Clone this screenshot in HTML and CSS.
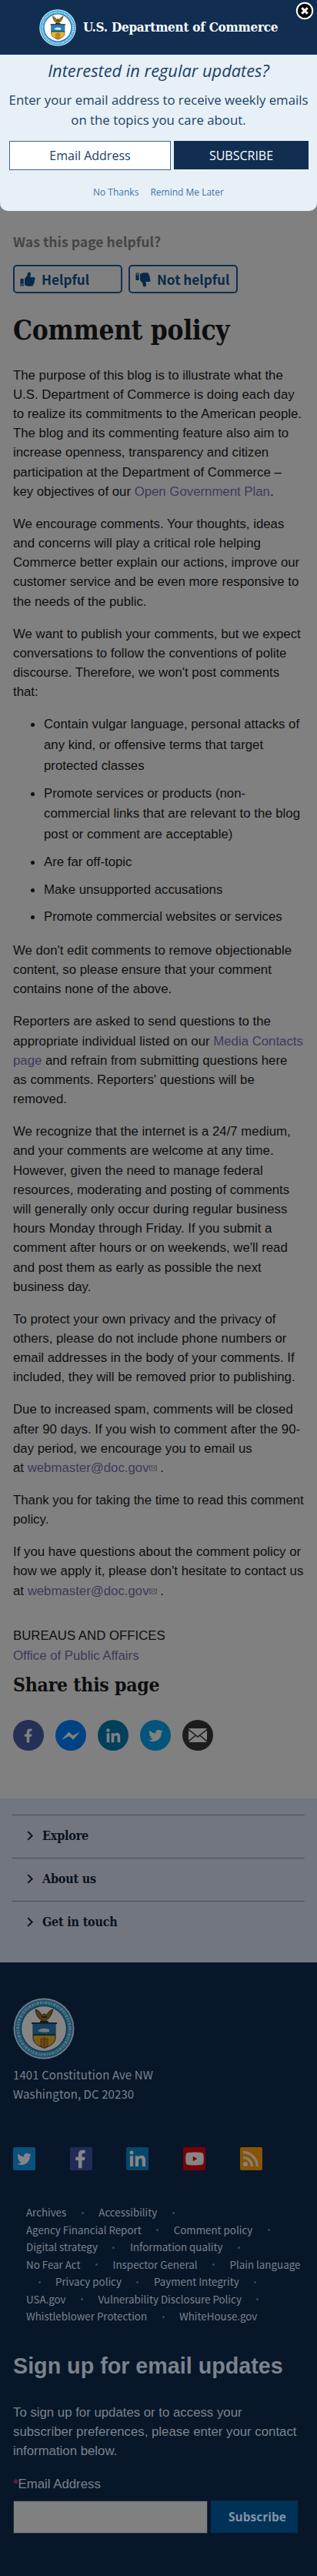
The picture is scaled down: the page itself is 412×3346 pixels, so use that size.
FILE: index.html
```html
<!DOCTYPE html>
<html lang="en">
<head>
<meta charset="utf-8">
<title>Comment policy | U.S. Department of Commerce</title>
<link rel="stylesheet" href="styles.css">
</head>
<body>
<svg class="defs" width="0" height="0" aria-hidden="true">
  <defs>
    <symbol id="seal" viewBox="0 0 80 80">
      <circle cx="40" cy="40" r="39.500" fill="#e4f1f8"/>
      <circle cx="40" cy="40" r="37.800" fill="#36a3da"/>
      <circle cx="40" cy="40" r="33.800" fill="none" stroke="#b5def2" stroke-width="3.600" stroke-dasharray="2.200 1.300 1.400 1.600 3 1.500"/>
      <circle cx="40" cy="40" r="30" fill="#17548a"/>
      <circle cx="40" cy="40" r="29" fill="#fff"/>
      <path d="M29 15c4 1 7 4 8.500 8l1.500-2h3l1 2c2-4 4.500-7 9-8-1 5-3 9-6 12l-3 2 2 3h-10l2-3-3-2c-3-3-4.500-7-5-12z" fill="#9b7420" stroke="#3c2c14" stroke-width=".8"/>
      <path d="M37 25h7M35 31h11" stroke="#241b10" stroke-width="1.500"/>
      <path d="M26 33h29v19c0 7-6 10-14.500 13.500C32 62 26 59 26 52z" fill="#e8b530" stroke="#2c3940"/>
      <path d="M26 33h29v16H26z" fill="#287fbc"/>
      <path d="M24 33h33" stroke="#243e4c" stroke-width="2"/>
      <path d="M26 47h29v2H26z" fill="#264b39"/>
      <path d="M32 43c4-4 9-4 15-2v3c-5 1-10 1-15-1z" fill="#dcecf5"/>
      <path d="M36 53h9v10l-4.500 2-4.500-2zM40.500 50v14" fill="#cb8d22" stroke="#7a541d" stroke-width=".8"/>
    </symbol>
    <symbol id="facebook" viewBox="0 0 24 24"><path d="M15.900 13.400l.6-3.800h-3.600V7.200c0-1 .5-2 2.100-2h1.600V1.900s-1.500-.3-2.900-.3c-3 0-4.900 1.800-4.900 5.100v2.900H5.500v3.800h3.300v9h4.100v-9z"/></symbol>
    <symbol id="linkedin" viewBox="0 0 24 24"><circle cx="4" cy="4" r="2.500"/><path d="M1.900 8.200h4.200V22H1.900zM8.800 8.200h4v1.900c.6-1.100 2-2.300 4.100-2.300 4.300 0 5.100 2.900 5.100 6.600V22h-4.200v-6.700c0-1.600 0-3.700-2.200-3.700S13 13.400 13 15.200V22H8.800z"/></symbol>
    <symbol id="twitter" viewBox="0 0 24 24"><path d="M22.500 5.300c-.8.300-1.600.6-2.500.7.900-.5 1.600-1.400 1.900-2.400-.8.500-1.800.9-2.700 1.100a4.300 4.300 0 0 0-7.400 3.900C8.200 8.400 5 6.700 2.900 4.100a4.300 4.300 0 0 0 1.300 5.800c-.7 0-1.400-.2-2-.5 0 2.100 1.500 3.900 3.500 4.300-.6.200-1.300.2-2 .1.600 1.700 2.200 2.900 4 3A8.700 8.700 0 0 1 1.400 18.500a12.200 12.200 0 0 0 18.800-10.900c.9-.6 1.700-1.400 2.300-2.300z"/></symbol>
    <symbol id="thumb" viewBox="0 0 20 20"><path d="M.5 9h4.200v9.500H.5zM6 9l2.500-2.700c.8-1 1.100-2 1.300-3.700C10 1.200 10.700.5 11.800.5c1.600 0 2.400 1.300 2.200 2.900L13.200 7h4.300c1.300 0 2.100.9 2.100 2 0 .8-.4 1.400-.9 1.700.6.9.5 2.100-.4 2.800.3 1-.1 2-.9 2.400.2 1.600-.8 2.800-2.700 2.800H11c-2 0-3.300-1.100-5-1.500z"/><circle cx="2.600" cy="16.500" r=".9" fill="#808080"/></symbol>
    <symbol id="envelope" viewBox="0 0 10 8"><path d="M.5 1h9v6h-9zM.5 1L5 4.500 9.500 1M.5 7l3.200-3M9.500 7L6.300 4" fill="none" stroke="#4c4c4c" stroke-width=".9"/></symbol>
  </defs>
</svg>

<section class="signup">
  <div class="brand">
    <svg class="brand-seal"><use href="#seal"/></svg>
    <span class="brand-name">U.S. Department of Commerce</span>
    <button class="close" aria-label="Close">
      <svg viewBox="0 0 24 24"><circle cx="12" cy="12" r="10.200" fill="#080808" stroke="#fff" stroke-width="2"/><path d="M8.300 8.300l7.400 7.400M15.700 8.300l-7.400 7.400" stroke="#fff" stroke-width="3"/></svg>
    </button>
  </div>
  <h2 class="signup-title">Interested in regular updates?</h2>
  <p class="signup-text">Enter your email address to receive weekly emails on the topics you care about.</p>
  <div class="signup-form">
    <div class="signup-input">Email Address</div>
    <div class="signup-button">SUBSCRIBE</div>
  </div>
  <div class="signup-links"><a>No Thanks</a><a>Remind Me Later</a></div>
</section>

<main class="content">
  <p class="helpful-title">Was this page helpful?</p>
  <div class="helpful">
    <div class="vote"><svg><use href="#thumb"/></svg><span>Helpful</span></div>
    <div class="vote"><svg class="down"><use href="#thumb"/></svg><span>Not helpful</span></div>
  </div>
  <h1 class="page-title"><span>Comment policy</span></h1>
  <div class="prose">
    <p>The purpose of this blog is to illustrate what the U.S. Department of Commerce is doing each day to realize its commitments to the American people. The blog and its commenting feature also aim to increase openness, transparency and citizen participation at the Department of Commerce – key objectives of our <a>Open Government Plan</a>.</p>
    <p>We encourage comments. Your thoughts, ideas and concerns will play a critical role helping Commerce better explain our actions, improve our customer service and be even more responsive to the needs of the public.</p>
    <p>We want to publish your comments, but we expect conversations to follow the conventions of polite discourse. Therefore, we won't post comments that:</p>
    <ul>
      <li>Contain vulgar language, personal attacks of any kind, or offensive terms that target protected classes</li>
      <li>Promote services or products (non-commercial links that are relevant to the blog post or comment are acceptable)</li>
      <li>Are far off-topic</li>
      <li>Make unsupported accusations</li>
      <li>Promote commercial websites or services</li>
    </ul>
    <p>We don't edit comments to remove objectionable content, so please ensure that your comment contains none of the above.</p>
    <p>Reporters are asked to send questions to the appropriate individual listed on our <a>Media Contacts page</a> and refrain from submitting questions here as comments. Reporters' questions will be removed.</p>
    <p>We recognize that the internet is a 24/7 medium, and your comments are welcome at any time. However, given the need to manage federal resources, moderating and posting of comments will generally only occur during regular business hours Monday through Friday. If you submit a comment after hours or on weekends, we'll read and post them as early as possible the next business day.</p>
    <p>To protect your own privacy and the privacy of others, please do not include phone numbers or email addresses in the body of your comments. If included, they will be removed prior to publishing.</p>
    <p>Due to increased spam, comments will be closed after 90 days. If you wish to comment after the 90-day period, we encourage you to email us at&nbsp;<a>webmaster@doc.gov<svg class="mail"><use href="#envelope"/></svg></a> .</p>
    <p>Thank you for taking the time to read this comment policy.</p>
    <p>If you have questions about the comment policy or how we apply it, please don't hesitate to contact us at&nbsp;<a>webmaster@doc.gov<svg class="mail"><use href="#envelope"/></svg></a> .</p>
    <div class="bureaus">BUREAUS AND OFFICES<br><a>Office of Public Affairs</a></div>
  </div>
  <h2 class="share-title"><span>Share this page</span></h2>
  <div class="share">
    <span class="round fb"><svg><use href="#facebook"/></svg></span>
    <span class="round msg"><svg viewBox="0 0 26 26"><path d="M1 19l9.500-10.500 5 4.700L25 8.500l-9 10.300-5-4.800z"/></svg></span>
    <span class="round in"><svg><use href="#linkedin"/></svg></span>
    <span class="round tw"><svg><use href="#twitter"/></svg></span>
    <span class="round em"><svg viewBox="0 0 26 20"><path d="M1 3.500L9.300 10 1 16.800zM25 3.500L16.700 10l8.300 6.800zM2 1h22c.5 0 .8.300.8.700L13 11 1.200 1.700C1.200 1.300 1.500 1 2 1zM1.600 18.200l8.800-7.200L13 13l2.600-2 8.800 7.200c0 .5-.4.8-.8.800H2.400c-.5 0-.8-.3-.8-.8z"/></svg></span>
  </div>
</main>

<nav class="sections">
  <div class="section"><svg viewBox="0 0 10 12"><path d="M2 1l5 5-5 5"/></svg><span>Explore</span></div>
  <div class="section"><svg viewBox="0 0 10 12"><path d="M2 1l5 5-5 5"/></svg><span>About us</span></div>
  <div class="section"><svg viewBox="0 0 10 12"><path d="M2 1l5 5-5 5"/></svg><span>Get in touch</span></div>
</nav>

<footer class="footer">
  <svg class="footer-seal"><use href="#seal"/></svg>
  <address class="address">1401 Constitution Ave NW<br>Washington, DC 20230</address>
  <div class="social">
    <span class="tile tw"><svg><use href="#twitter"/></svg></span>
    <span class="tile fb"><svg><use href="#facebook"/></svg></span>
    <span class="tile in"><svg><use href="#linkedin"/></svg></span>
    <span class="tile yt"><svg viewBox="0 0 24 24"><path fill-rule="evenodd" d="M4 4q8-1 16 0 3.500.3 3.500 3.500.6 4.500 0 9 0 3.200-3.500 3.500-8 1-16 0-3.500-.3-3.500-3.500-.6-4.500 0-9Q.5 4.300 4 4zm5.800 4.800v6.400l5.600-3.200z"/></svg></span>
    <span class="tile rss"><svg viewBox="0 0 24 24"><circle cx="5" cy="19" r="3"/><path d="M2 10.500A11.500 11.500 0 0 1 13.500 22M2 3.700A18.300 18.300 0 0 1 20.300 22" fill="none" stroke="#857f76" stroke-width="3.200"/></svg></span>
  </div>
  <div class="links">
    <div><a>Archives</a><i></i><a>Accessibility</a><i></i></div>
    <div><a>Agency Financial Report</a><i></i><a>Comment policy</a><i></i></div>
    <div><a>Digital strategy</a><i></i><a>Information quality</a><i></i></div>
    <div><a>No Fear Act</a><i></i><a>Inspector General</a><i></i><a>Plain language</a></div>
    <div class="wrapped"><i></i><a>Privacy policy</a><i></i><a>Payment Integrity</a><i></i></div>
    <div><a>USA.gov</a><i></i><a>Vulnerability Disclosure Policy</a><i></i></div>
    <div><a>Whistleblower Protection</a><i></i><a>WhiteHouse.gov</a></div>
  </div>
  <h2 class="updates-title">Sign up for email updates</h2>
  <p class="updates-text">To sign up for updates or to access your subscriber preferences, please enter your contact information below.</p>
  <div class="label"><b>*</b>Email Address</div>
  <div class="updates-form"><div class="field"></div><div class="submit">Subscribe</div></div>
</footer>
</body>
</html>
```
FILE: styles.css
```css
* { box-sizing: border-box; }
body {
  margin: 0;
  background: #808080;
  color: #0e0e0e;
  font-family: "Liberation Sans", Arial, sans-serif;
  font-size: 16.8px;
}
p, h1, h2, ul { margin: 0; }
.defs { display: block; height: 0; }

/* Subscription panel */
.signup {
  height: 274px;
  background: #e7f0f7;
  color: #1b4166;
  border-radius: 0 0 10px 10px;
  font-family: "Open Sans", "Noto Sans", sans-serif;
  text-align: center;
}
.brand {
  position: relative;
  height: 71px;
  background: #112e51;
  display: flex;
  align-items: center;
  padding-left: 51px;
}
.brand-seal { width: 48px; height: 48px; flex: none; }
.brand-name {
  margin-left: 9px;
  font: bold 17px/1 "DejaVu Serif Condensed", "DejaVu Serif", serif;
  font-stretch: condensed;
  letter-spacing: -.25px;
  white-space: nowrap;
  color: #fff;
}
.close {
  position: absolute;
  right: 4px;
  top: 2px;
  width: 24px;
  height: 24px;
  padding: 0;
  border: 0;
  background: none;
}
.close svg { display: block; width: 24px; height: 24px; }
.signup-title { padding-top: 5px; font-size: 21.800px; line-height: 31px; font-style: italic; font-weight: 400; }
.signup-text { padding: 10px 8px 0; font-size: 16.800px; line-height: 25.500px; }
.signup-form { display: flex; gap: 4px; margin: 15px 11px 0 12px; font-size: 16px; }
.signup-input { width: 210px; height: 38px; line-height: 37px; background: #fff; border: 1px solid #3b6591; }
.signup-button { flex: 1; height: 37px; line-height: 38px; background: #112e51; color: #fff; }
.signup-links { display: flex; justify-content: center; gap: 15px; margin-top: 20px; font-size: 12px; line-height: 18px; color: #4375a5; }

/* Article */
.content { padding: 25px 17px 0; height: 2062px; }
.helpful-title { height: 30px; font: bold 17.600px/30px "Noto Sans CJK JP", sans-serif; color: #454545; }
.helpful { display: flex; gap: 8px; margin-top: 15px; }
.vote {
  width: 142px;
  height: 37px;
  display: flex;
  align-items: center;
  gap: 8px;
  padding-left: 7px;
  border: 2px solid #10304c;
  border-radius: 5px;
  color: #08294b;
  font: bold 17.200px/30px "Noto Sans CJK JP", sans-serif;
  white-space: nowrap;
}
.vote svg { width: 20px; height: 20px; fill: #08294b; flex: none; }
.down { transform: scaleY(-1); }
.page-title, .share-title {
  font-family: "DejaVu Serif Condensed", "DejaVu Serif", serif;
  font-stretch: condensed;
  font-weight: bold;
  white-space: nowrap;
}
.page-title { margin-top: 26px; font-size: 35px; line-height: 44px; letter-spacing: -.3px; }
.prose { margin-top: 23.500px; line-height: 25.200px; }
.prose p { margin-bottom: 16.800px; }
.prose a { color: #3e3958; }
.prose ul { padding-left: 23px; margin-bottom: 17px; line-height: 26.880px; list-style: none; }
.prose li { display: flex; gap: 12px; }
.prose li::before { content: ""; flex: none; width: 5px; height: 5px; margin-top: 11px; border-radius: 50%; background: #0e0e0e; }
.prose li + li { margin-top: 8.750px; }
.mail { width: 10px; height: 8px; vertical-align: 1px; }
.bureaus { padding-top: 16.800px; }
.share-title { margin-top: 8px; font-size: 24.500px; line-height: 36px; letter-spacing: -.2px; }
.share { display: flex; gap: 15px; margin-top: 27.500px; }
.round { width: 40px; height: 40px; border-radius: 50%; display: flex; align-items: center; justify-content: center; }
.round svg { width: 21px; height: 21px; fill: #808080; }
.round.msg svg, .round.em svg { width: 26px; height: 26px; }
.round.fb { background: #253057; }
.round.msg { background: #004283; }
.round.in { background: #00405c; }
.round.tw { background: #05547b; }
.round.em { background: #1c1c1c; }

/* Section links */
.sections { height: 213px; padding: 21px 16px 0; background: #72777f; }
.section {
  height: 56px;
  padding: 0 0 2px 18px;
  border-top: 1px solid #484e57;
  display: flex;
  align-items: center;
  gap: 10px;
  color: #09111d;
  font: bold 16px/1 "DejaVu Serif Condensed", "DejaVu Serif", serif;
  font-stretch: condensed;
  letter-spacing: -.2px;
}
.section svg { width: 11px; height: 13px; fill: none; stroke: #09111d; stroke-width: 1.800; }

/* Footer */
.footer { height: 797px; padding: 46px 17px 0; background: #081629; color: #7b838f; }
.footer-seal { display: block; width: 80px; height: 80px; filter: brightness(.52); }
.address { margin-top: 7px; font: 15px/25px "Noto Sans CJK JP", sans-serif; letter-spacing: .1px; }
.social { display: flex; gap: 44.700px; margin-top: 57px; }
.tile { width: 29px; height: 30px; border-radius: 2px; display: flex; align-items: center; justify-content: center; }
.tile svg { width: 24px; height: 24px; fill: #858585; }
.tile.tw { background: #0a517c; }
.tile.tw svg { width: 21px; height: 21px; }
.tile.fb { background: #202c57; }
.tile.fb svg { width: 27px; height: 29px; }
.tile.in { background: #06466b; }
.tile.yt { background: #780007; }
.tile.rss { background: #885407; }
.links { margin: 44px 0 0 17px; font: 13.350px/22.500px "Noto Sans CJK JP", sans-serif; }
.links div { display: flex; align-items: center; height: 22.500px; white-space: nowrap; }
.links i { width: 42px; flex: none; display: flex; justify-content: center; }
.links i::before { content: ""; width: 3px; height: 3px; border-radius: 50%; background: #3c4858; }
.links .wrapped { margin-left: -4px; }
.updates-title { margin-top: 33px; font-size: 28.700px; line-height: 38px; }
.updates-text { margin-top: 29px; line-height: 25.400px; }
.label { margin-top: 17px; line-height: 25px; }
.label b { color: #761b36; }
.updates-form { display: flex; gap: 4px; margin-top: 9px; }
.field { width: 253px; height: 43px; background: #808080; border: 1px solid #222d3b; }
.submit { width: 113px; height: 42px; background: #003157; color: #8194a7; padding-left: 8px; text-align: center; font: bold 15.500px/42px "Open Sans", sans-serif; }
```
